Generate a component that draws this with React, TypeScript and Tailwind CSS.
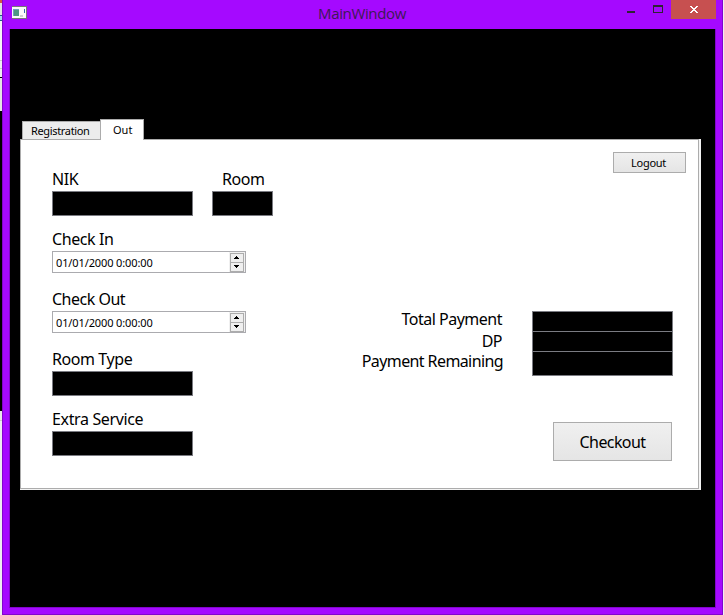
import type { ReactNode } from "react";

const FONT = "font-['Noto_Sans','DejaVu_Sans',sans-serif]";

function Label({ children, className = "" }: { children: ReactNode; className?: string }) {
  return (
    <div className={`h-[22px] whitespace-nowrap text-[16px] leading-[20px] ${className}`}>{children}</div>
  );
}

function Blank({ className = "" }: { className?: string }) {
  return <div className={`h-[25px] w-[141px] border border-[#7a7b82] bg-black ${className}`} />;
}

function Arrow({ down = false }: { down?: boolean }) {
  return (
    <div className="flex h-[10px] w-[14px] items-center justify-center border border-[#acacac] bg-[#efefef] first:mb-[-1px]">
      <svg width="5" height="3" viewBox="0 0 5 3" shapeRendering="crispEdges" className={`mr-px ${down ? "rotate-180" : ""}`}>
        <path d="M2 0h1v1h1v1h1v1H0V2h1V1h1z" fill="#000" />
      </svg>
    </div>
  );
}

function DateField() {
  return (
    <div className="flex h-[22px] w-[194px] items-center justify-between border border-[#ababaf] bg-white pl-[3px]">
      <span className="whitespace-nowrap pt-[2px] text-[11px] leading-[20px] tracking-[-0.12px]">01/01/2000 0:00:00</span>
      <div className="flex h-[20px] flex-col justify-center bg-[#f0f0f0] pl-px pr-[1px]">
        <Arrow />
        <Arrow down />
      </div>
    </div>
  );
}

function TitleBar() {
  return (
    <header className="flex h-[29px] items-start">
      <svg className="ml-[9px] mt-[6px] shrink-0" width="15" height="13" viewBox="0 0 15 13" shapeRendering="crispEdges">
        <rect width="15" height="13" fill="#77777b" />
        <rect x="0" y="1" width="14" height="11" fill="#fafafa" />
        <rect x="1" y="3" width="6" height="7" fill="#6f9fc0" />
        <rect x="2" y="4" width="5" height="6" fill="#4f9584" />
        <rect x="8" y="9" width="3" height="2" fill="#cfcfcf" />
        <rect x="12" y="3" width="1" height="4" fill="#3568ac" />
      </svg>
      <div className="ml-[291px] w-[90px] whitespace-nowrap font-['Open_Sans',sans-serif] text-[15px] leading-[27px] tracking-[-0.35px] text-[#3d1a55]">
        MainWindow
      </div>
      <div className="ml-auto mr-[6px] flex h-[19px] items-start">
        <div className="mt-[11px] h-[2px] w-[8px] bg-[#2d2433]" />
        <div className="ml-[18px] mt-[5px] h-[8px] w-[10px] border border-t-2 border-[#2d2433]" />
        <div className="ml-[8px] flex h-[19px] w-[45px] items-center justify-center bg-[#c75050]">
          <svg width="8" height="7" viewBox="0 0 8 7" shapeRendering="crispEdges">
            <path
              d="M0 0h2v1h1v1h2V1h1V0h2v1H7v1H6v1H5v1h1v1h1v1h1v1H6V6H5V5H3v1H2v1H0V6h1V5h1V4h1V3H2V2H1V1H0z"
              fill="#fff"
            />
          </svg>
        </div>
      </div>
    </header>
  );
}

export default function App() {
  return (
    <div className={`flex h-[615px] w-[724px] overflow-hidden bg-[#eeeef2] text-black ${FONT}`}>
      <div className="w-[2px] shrink-0">
        <div className="h-[3px] bg-[#d75343]" />
        <div className="h-[12px] bg-[#e2e2e2]" />
        <div className="h-[6px] border-y border-[#245c86] bg-[#a9d5ed]" />
        <div className="h-[39px] bg-[#f7f7f7]" />
        <div className="h-[9px] border-y border-[#c9c9c9]" />
        <div className="mt-[8px] h-px bg-black" />
        <div className="h-[33px] bg-[#e5e5e5]" />
        <div className="h-[300px] bg-black" />
        <div className="h-[10px] border-b border-[#c9c9c9] bg-[#e8e8e8]" />
      </div>
      <div className="flex w-[721px] shrink-0 flex-col border-x border-b border-[#8205cc] bg-[#a509ff]">
        <TitleBar />
        <main className="mx-[6px] mb-[6px] flex-1 border-x border-b border-[#8205cc] bg-black pl-[10px] pt-[90px]">
          <div className="flex h-[20px] items-end pl-[2px] text-[11px]">
            <div className="h-[18px] w-[78px] whitespace-nowrap border border-r-0 border-b-0 border-[#acacac] bg-[#ececec] pl-[8px] leading-[18px] tracking-[-0.34px]">
              Registration
            </div>
            <div className="relative -mb-px h-[21px] w-[44px] border border-b-0 border-[#acacac] bg-white pl-[12px] leading-[20px]">
              Out
            </div>
          </div>
          <div className="h-[351px] w-[681px] bg-[#f3f3f3]">
            <section className="flex h-[350px] w-[679px] justify-between border border-[#acacac] bg-white pl-[31px] pr-[12px] pt-[12px]">
              <div className="flex flex-col pt-[17px] tracking-[-0.42px]">
                <div className="flex h-[60px] gap-[19px]">
                  <div>
                    <Label>NIK</Label>
                    <Blank />
                  </div>
                  <div>
                    <Label className="pl-[10px]">Room</Label>
                    <Blank className="w-[61px]!" />
                  </div>
                </div>
                <div className="h-[60px]">
                  <Label>Check In</Label>
                  <DateField />
                </div>
                <div className="h-[60px]">
                  <Label className="tracking-[-0.5px]">Check Out</Label>
                  <DateField />
                </div>
                <div className="h-[60px]">
                  <Label>Room Type</Label>
                  <Blank />
                </div>
                <div>
                  <Label className="tracking-[-0.36px]">Extra Service</Label>
                  <Blank />
                </div>
              </div>
              <div className="flex flex-col items-end">
                <button className="h-[21px] w-[73px] border border-[#acacac] bg-linear-to-b from-[#f0f0f0] to-[#e5e5e5] pr-[2px] text-[11px] leading-[19px] tracking-[-0.3px]">
                  Logout
                </button>
                <div className="mr-[13px] mt-[136px] flex gap-[29px]">
                  <div className="text-right">
                    <Label className="pr-px tracking-[-0.5px]">Total Payment</Label>
                    <Label className="h-[20px]! pr-px tracking-[-0.5px]">DP</Label>
                    <Label className="tracking-[-0.6px]">Payment Remaining</Label>
                  </div>
                  <div className="mt-[2px] h-[65px] w-[141px]">
                    <Blank />
                    <Blank className="-mt-[5px]" />
                    <Blank className="-mt-[5px]" />
                  </div>
                </div>
                <button className="mr-[14px] mt-[46px] h-[39px] w-[119px] border border-[#acacac] bg-linear-to-b from-[#f0f0f0] to-[#e5e5e5] text-[16px] leading-[36px] tracking-[-0.6px]">
                  Checkout
                </button>
              </div>
            </section>
          </div>
        </main>
      </div>
    </div>
  );
}
